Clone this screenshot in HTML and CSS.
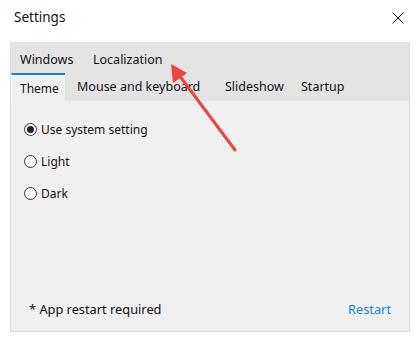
FILE: index.html
```html
<!DOCTYPE html>
<html lang="en">
<head>
  <meta charset="UTF-8" />
  <title>Settings</title>
  <link rel="stylesheet" href="styles.css">
</head>
<body>
  <div class="window">
    <div class="titlebar">
      <span class="title">Settings</span>
      <svg class="close" width="12" height="12" viewBox="0 0 12 12"><path d="M0.5 0.5 L11.5 11.5 M11.5 0.5 L0.5 11.5" stroke="#111" stroke-width="1"/></svg>
    </div>
    <div class="tabs">
      <div class="tab-row back">
        <div class="tab tab-windows">Windows</div>
        <div class="tab">Localization</div>
      </div>
      <div class="tab-row front">
        <div class="tab selected">Theme</div>
        <div class="tab tab-mouse">Mouse and keyboard</div>
        <div class="tab tab-slideshow">Slideshow</div>
        <div class="tab">Startup</div>
      </div>
      <div class="page">
        <label class="radio"><span class="dot checked"></span>Use system setting</label>
        <label class="radio"><span class="dot"></span>Light</label>
        <label class="radio"><span class="dot"></span>Dark</label>
        <div class="footer">
          <span>* App restart required</span>
          <span class="link">Restart</span>
        </div>
      </div>
    </div>
    <!-- annotation arrow -->
    <svg class="arrow" width="420" height="342" viewBox="0 0 420 342">
      <line x1="235" y1="150" x2="176" y2="71" stroke="#e8463f" stroke-width="3" stroke-linecap="round"/>
      <polygon points="171,64 173,83 187,73" fill="#e8463f"/>
    </svg>
  </div>
</body>
</html>
```

FILE: styles.css
```css
* { box-sizing: border-box; margin: 0; padding: 0; }
body {
  font-family: 'Noto Sans', sans-serif;
  font-size: 12px;
  color: #111;
  background: #fff;
}
.window { position: relative; width: 420px; height: 342px; }
.titlebar {
  height: 42px;
  display: flex;
  align-items: flex-start;
  justify-content: space-between;
  padding: 8px 16px 0 14px;
}
.title { font-size: 13.5px; }
.close { margin-top: 4px; }
.tabs {
  margin: 0 10px;
  height: 290px;
  border: 1px solid #dadada;
  border-top: none;
  display: flex;
  flex-direction: column;
  background: #f0f0f0;
}
.tab-row { display: flex; background: #e3e3e3; font-size: 12.5px; }
.tab-row.back { height: 31px; align-items: center; padding-top: 3px; }
.tab-row.front { height: 28px; }
.tab { white-space: nowrap; }
.back .tab { padding: 0 0 0 9px; }
.back .tab-windows { width: 73px; }
.front .tab { display: flex; align-items: center; padding: 0 0 1px 12px; }
.front .tab-mouse { width: 148px; }
.front .tab-slideshow { width: 76px; }
.front .tab.selected {
  background: #f0f0f0;
  border-top: 2px solid #1a7fd4;
  border-left: 1px solid #fff;
  padding: 0 0 0 8px;
  width: 54px;
  font-size: 12px;
}
.page {
  flex: 1;
  display: flex;
  flex-direction: column;
  padding: 18px 18px 13px 13px;
}
.radio { display: flex; align-items: center; height: 20px; margin-bottom: 12px; }
.dot {
  width: 13px; height: 13px;
  border: 1px solid #333;
  border-radius: 50%;
  background: #fff;
  margin-right: 4px;
  display: flex; align-items: center; justify-content: center;
}
.dot.checked::after {
  content: '';
  width: 7px; height: 7px;
  border-radius: 50%;
  background: #222;
}
.footer {
  margin-top: auto;
  display: flex;
  justify-content: space-between;
  padding-left: 5px;
  font-size: 12.8px;
}
.link { color: #1a7fd4; }
.arrow { position: absolute; left: 0; top: 0; pointer-events: none; }
```
